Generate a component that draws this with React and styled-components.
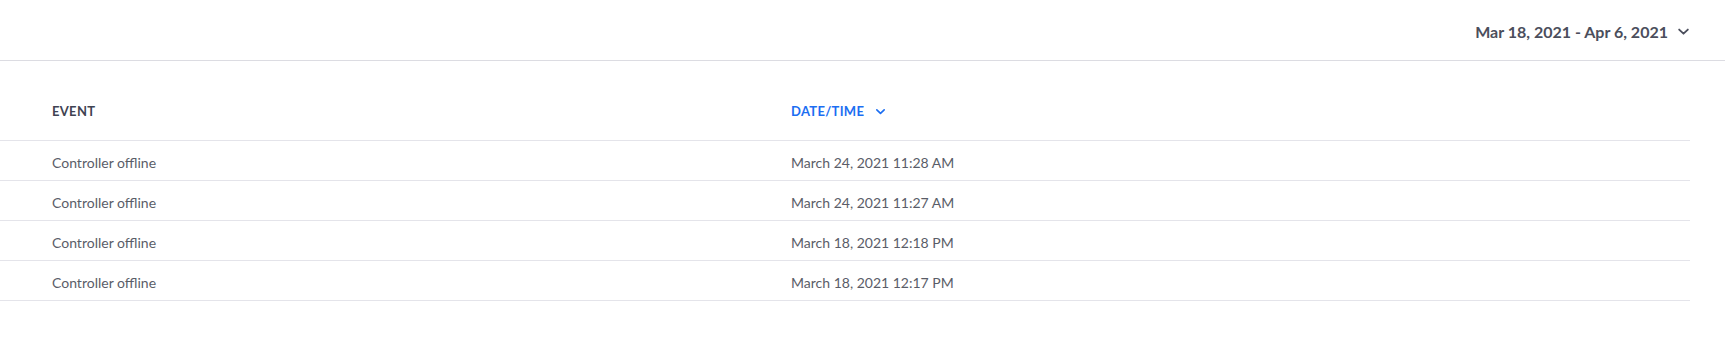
import React from "react";
import styled, { createGlobalStyle } from "styled-components";

const GlobalStyle = createGlobalStyle`
  body {
    margin: 0;
    background: #ffffff;
    font-family: Lato, "Open Sans", sans-serif;
  }
`;

const rows = [
  { event: "Controller offline", date: "March 24, 2021 11:28 AM" },
  { event: "Controller offline", date: "March 24, 2021 11:27 AM" },
  { event: "Controller offline", date: "March 18, 2021 12:18 PM" },
  { event: "Controller offline", date: "March 18, 2021 12:17 PM" },
];

function Chevron({ size = 12, color = "currentColor", stroke = 1.8 }) {
  return (
    <svg width={size} height={size} viewBox="0 0 12 12" fill="none">
      <path d="M2 4.2 L6 8 L10 4.2" stroke={color} strokeWidth={stroke} strokeLinecap="round" strokeLinejoin="round" />
    </svg>
  );
}

export default function App() {
  return (
    <Page>
      <GlobalStyle />
      <TopBar>
        <RangePicker>
          Mar 18, 2021 - Apr 6, 2021
          <Chevron size={13} color="#4b4e5c" stroke={1.7} />
        </RangePicker>
      </TopBar>
      <TableWrap>
        <HeadRow>
          <HeadCell>Event</HeadCell>
          <HeadCell $active>
            Date/Time
            <Chevron size={11} color="#1c6ef2" stroke={1.8} />
          </HeadCell>
        </HeadRow>
        {rows.map((r, i) => (
          <Row key={i}>
            <Cell>{r.event}</Cell>
            <Cell>{r.date}</Cell>
          </Row>
        ))}
      </TableWrap>
    </Page>
  );
}

const Page = styled.div`
  width: 100%;
  min-height: 340px;
  background: #ffffff;
`;

const TopBar = styled.div`
  height: 61px;
  display: flex;
  justify-content: flex-end;
  align-items: center;
  padding: 2px 35px 0 0;
  border-bottom: 1px solid #dcdce2;
  box-sizing: border-box;
`;

const RangePicker = styled.div`
  display: flex;
  align-items: center;
  gap: 9px;
  color: #4b4e5c;
  font-size: 16px;
  font-weight: 700;
  white-space: nowrap;
  cursor: pointer;
`;

const TableWrap = styled.div`
  margin: 19px 35px 0 0;
  display: flex;
  flex-direction: column;
`;

const HeadRow = styled.div`
  display: grid;
  grid-template-columns: 739px 1fr;
  height: 61px;
  align-items: center;
  padding: 2px 0 0 52px;
  border-bottom: 1px solid #e4e4ea;
  box-sizing: border-box;
`;

const HeadCell = styled.div`
  display: flex;
  align-items: center;
  gap: 11px;
  color: ${(p) => (p.$active ? "#1c6ef2" : "#3f4352")};
  font-size: 13px;
  font-weight: 700;
  letter-spacing: 0.3px;
  text-transform: uppercase;
`;

const Row = styled.div`
  display: grid;
  grid-template-columns: 739px 1fr;
  height: 40px;
  align-items: center;
  padding: 3px 0 0 52px;
  border-bottom: 1px solid #e4e4ea;
  box-sizing: border-box;
`;

const Cell = styled.div`
  color: #5a5d68;
  font-size: 14px;
  white-space: nowrap;
`;
